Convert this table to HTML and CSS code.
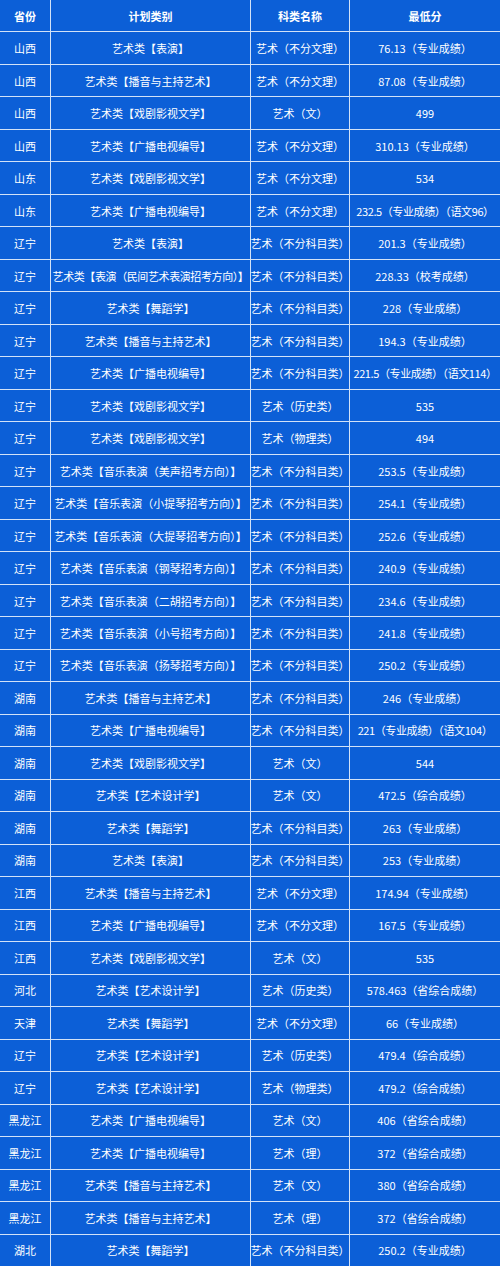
FILE: index.html
```html
<!DOCTYPE html>
<html lang="zh-CN">
<head>
<meta charset="utf-8">
<title>艺术类录取分数</title>
<link rel="stylesheet" href="styles.css">
</head>
<body>
<div class="grid">
  <div class="c h">省份</div><div class="c h">计划类别</div><div class="c h">科类名称</div><div class="c h">最低分</div>
  <div class="c">山西</div><div class="c">艺术类【表演】</div><div class="c">艺术（不分文理）</div><div class="c">76.13（专业成绩）</div>
  <div class="c">山西</div><div class="c">艺术类【播音与主持艺术】</div><div class="c">艺术（不分文理）</div><div class="c">87.08（专业成绩）</div>
  <div class="c">山西</div><div class="c">艺术类【戏剧影视文学】</div><div class="c">艺术（文）</div><div class="c">499</div>
  <div class="c">山西</div><div class="c">艺术类【广播电视编导】</div><div class="c">艺术（不分文理）</div><div class="c">310.13（专业成绩）</div>
  <div class="c">山东</div><div class="c">艺术类【戏剧影视文学】</div><div class="c">艺术（不分文理）</div><div class="c">534</div>
  <div class="c">山东</div><div class="c">艺术类【广播电视编导】</div><div class="c">艺术（不分文理）</div><div class="c tight">232.5（专业成绩）（语文96）</div>
  <div class="c">辽宁</div><div class="c">艺术类【表演】</div><div class="c">艺术（不分科目类）</div><div class="c">201.3（专业成绩）</div>
  <div class="c">辽宁</div><div class="c tight">艺术类【表演（民间艺术表演招考方向）】</div><div class="c">艺术（不分科目类）</div><div class="c">228.33（校考成绩）</div>
  <div class="c">辽宁</div><div class="c">艺术类【舞蹈学】</div><div class="c">艺术（不分科目类）</div><div class="c">228（专业成绩）</div>
  <div class="c">辽宁</div><div class="c">艺术类【播音与主持艺术】</div><div class="c">艺术（不分科目类）</div><div class="c">194.3（专业成绩）</div>
  <div class="c">辽宁</div><div class="c">艺术类【广播电视编导】</div><div class="c">艺术（不分科目类）</div><div class="c tight">221.5（专业成绩）（语文114）</div>
  <div class="c">辽宁</div><div class="c">艺术类【戏剧影视文学】</div><div class="c">艺术（历史类）</div><div class="c">535</div>
  <div class="c">辽宁</div><div class="c">艺术类【戏剧影视文学】</div><div class="c">艺术（物理类）</div><div class="c">494</div>
  <div class="c">辽宁</div><div class="c">艺术类【音乐表演（美声招考方向）】</div><div class="c">艺术（不分科目类）</div><div class="c">253.5（专业成绩）</div>
  <div class="c">辽宁</div><div class="c">艺术类【音乐表演（小提琴招考方向）】</div><div class="c">艺术（不分科目类）</div><div class="c">254.1（专业成绩）</div>
  <div class="c">辽宁</div><div class="c">艺术类【音乐表演（大提琴招考方向）】</div><div class="c">艺术（不分科目类）</div><div class="c">252.6（专业成绩）</div>
  <div class="c">辽宁</div><div class="c">艺术类【音乐表演（钢琴招考方向）】</div><div class="c">艺术（不分科目类）</div><div class="c">240.9（专业成绩）</div>
  <div class="c">辽宁</div><div class="c">艺术类【音乐表演（二胡招考方向）】</div><div class="c">艺术（不分科目类）</div><div class="c">234.6（专业成绩）</div>
  <div class="c">辽宁</div><div class="c">艺术类【音乐表演（小号招考方向）】</div><div class="c">艺术（不分科目类）</div><div class="c">241.8（专业成绩）</div>
  <div class="c">辽宁</div><div class="c">艺术类【音乐表演（扬琴招考方向）】</div><div class="c">艺术（不分科目类）</div><div class="c">250.2（专业成绩）</div>
  <div class="c">湖南</div><div class="c">艺术类【播音与主持艺术】</div><div class="c">艺术（不分科目类）</div><div class="c">246（专业成绩）</div>
  <div class="c">湖南</div><div class="c">艺术类【广播电视编导】</div><div class="c">艺术（不分科目类）</div><div class="c tight">221（专业成绩）（语文104）</div>
  <div class="c">湖南</div><div class="c">艺术类【戏剧影视文学】</div><div class="c">艺术（文）</div><div class="c">544</div>
  <div class="c">湖南</div><div class="c">艺术类【艺术设计学】</div><div class="c">艺术（文）</div><div class="c">472.5（综合成绩）</div>
  <div class="c">湖南</div><div class="c">艺术类【舞蹈学】</div><div class="c">艺术（不分科目类）</div><div class="c">263（专业成绩）</div>
  <div class="c">湖南</div><div class="c">艺术类【表演】</div><div class="c">艺术（不分科目类）</div><div class="c">253（专业成绩）</div>
  <div class="c">江西</div><div class="c">艺术类【播音与主持艺术】</div><div class="c">艺术（不分文理）</div><div class="c">174.94（专业成绩）</div>
  <div class="c">江西</div><div class="c">艺术类【广播电视编导】</div><div class="c">艺术（不分文理）</div><div class="c">167.5（专业成绩）</div>
  <div class="c">江西</div><div class="c">艺术类【戏剧影视文学】</div><div class="c">艺术（文）</div><div class="c">535</div>
  <div class="c">河北</div><div class="c">艺术类【艺术设计学】</div><div class="c">艺术（历史类）</div><div class="c">578.463（省综合成绩）</div>
  <div class="c">天津</div><div class="c">艺术类【舞蹈学】</div><div class="c">艺术（不分文理）</div><div class="c">66（专业成绩）</div>
  <div class="c">辽宁</div><div class="c">艺术类【艺术设计学】</div><div class="c">艺术（历史类）</div><div class="c">479.4（综合成绩）</div>
  <div class="c">辽宁</div><div class="c">艺术类【艺术设计学】</div><div class="c">艺术（物理类）</div><div class="c">479.2（综合成绩）</div>
  <div class="c">黑龙江</div><div class="c">艺术类【广播电视编导】</div><div class="c">艺术（文）</div><div class="c">406（省综合成绩）</div>
  <div class="c">黑龙江</div><div class="c">艺术类【广播电视编导】</div><div class="c">艺术（理）</div><div class="c">372（省综合成绩）</div>
  <div class="c">黑龙江</div><div class="c">艺术类【播音与主持艺术】</div><div class="c">艺术（文）</div><div class="c">380（省综合成绩）</div>
  <div class="c">黑龙江</div><div class="c">艺术类【播音与主持艺术】</div><div class="c">艺术（理）</div><div class="c">372（省综合成绩）</div>
  <div class="c">湖北</div><div class="c">艺术类【舞蹈学】</div><div class="c">艺术（不分科目类）</div><div class="c">250.2（专业成绩）</div>
</div>
</body>
</html>
```

FILE: styles.css
```css
html, body {
  margin: 0;
  padding: 0;
  background: #0c5fd7;
}

.grid {
  display: grid;
  grid-template-columns: 50px 199px 98px 150px;
  grid-auto-rows: 1fr;
  gap: 1px;
  width: 500px;
  height: 1266px;
  background: #d2e2f8;
  overflow: hidden;
}

.c {
  background: #0c5fd7;
  color: #ffffff;
  font-family: "Noto Sans CJK SC", "DejaVu Sans", sans-serif;
  font-size: 11px;
  display: flex;
  align-items: center;
  justify-content: center;
  white-space: nowrap;
  overflow: visible;
  text-align: center;
}

.h {
  font-weight: bold;
}

.tight {
  letter-spacing: -0.4px;
}
```
